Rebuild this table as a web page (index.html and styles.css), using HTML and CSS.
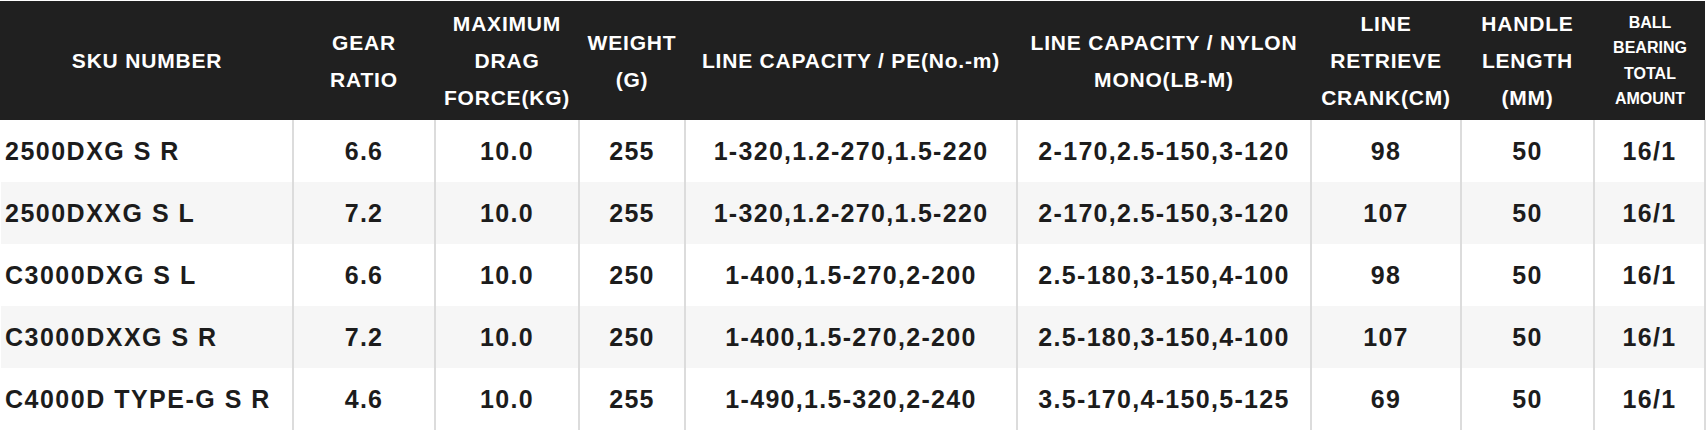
FILE: index.html
```html
<!DOCTYPE html>
<html lang="en">
<head>
<meta charset="utf-8">
<title>Spec table</title>
<link rel="stylesheet" href="styles.css">
</head>
<body>
<table class="spec">
  <colgroup>
    <col class="c-sku"><col class="c-gear"><col class="c-drag"><col class="c-weight"><col class="c-pe"><col class="c-nylon"><col class="c-crank"><col class="c-handle"><col class="c-ball">
  </colgroup>
  <thead>
    <tr>
      <th>SKU NUMBER</th>
      <th>GEAR<br>RATIO</th>
      <th>MAXIMUM<br>DRAG<br>FORCE(KG)</th>
      <th>WEIGHT<br>(G)</th>
      <th>LINE CAPACITY / PE(No.-m)</th>
      <th>LINE CAPACITY / NYLON<br>MONO(LB-M)</th>
      <th>LINE<br>RETRIEVE<br>CRANK(CM)</th>
      <th>HANDLE<br>LENGTH<br>(MM)</th>
      <th class="small">BALL<br>BEARING<br>TOTAL<br>AMOUNT</th>
    </tr>
  </thead>
  <tbody>
    <tr><td class="sku">2500DXG S R</td><td>6.6</td><td>10.0</td><td>255</td><td>1-320,1.2-270,1.5-220</td><td>2-170,2.5-150,3-120</td><td>98</td><td>50</td><td>16/1</td></tr>
    <tr><td class="sku">2500DXXG S L</td><td>7.2</td><td>10.0</td><td>255</td><td>1-320,1.2-270,1.5-220</td><td>2-170,2.5-150,3-120</td><td>107</td><td>50</td><td>16/1</td></tr>
    <tr><td class="sku">C3000DXG S L</td><td>6.6</td><td>10.0</td><td>250</td><td>1-400,1.5-270,2-200</td><td>2.5-180,3-150,4-100</td><td>98</td><td>50</td><td>16/1</td></tr>
    <tr><td class="sku">C3000DXXG S R</td><td>7.2</td><td>10.0</td><td>250</td><td>1-400,1.5-270,2-200</td><td>2.5-180,3-150,4-100</td><td>107</td><td>50</td><td>16/1</td></tr>
    <tr><td class="sku">C4000D TYPE-G S R</td><td>4.6</td><td>10.0</td><td>255</td><td>1-490,1.5-320,2-240</td><td>3.5-170,4-150,5-125</td><td>69</td><td>50</td><td>16/1</td></tr>
  </tbody>
</table>
</body>
</html>
```
FILE: styles.css
```css
html, body {
  margin: 0;
  padding: 0;
  background: #ffffff;
}
body {
  padding-top: 1px;
}
.spec {
  width: 1704px;
  table-layout: fixed;
  border-collapse: collapse;
  font-family: "Liberation Sans", Arial, sans-serif;
  font-weight: 700;
}
.c-sku { width: 292px; }
.c-gear { width: 142px; }
.c-drag { width: 144px; }
.c-weight { width: 106px; }
.c-pe { width: 332px; }
.c-nylon { width: 294px; }
.c-crank { width: 150px; }
.c-handle { width: 133px; }
.c-ball { width: 111px; }

.spec th {
  background: #202020;
  color: #ffffff;
  font-size: 21px;
  line-height: 37px;
  height: 119px;
  padding: 0 2px;
  text-align: center;
  vertical-align: middle;
  border-left: 2px solid #202020;
  letter-spacing: 0.8px;
}
.spec th.small {
  font-size: 16px;
  line-height: 25.5px;
  letter-spacing: 0;
}
.spec td {
  height: 62px;
  padding: 0 4px;
  font-size: 25px;
  letter-spacing: 1.3px;
  color: #1c1c1c;
  text-align: center;
  vertical-align: middle;
  border-left: 2px solid #dcdcdc;
  white-space: nowrap;
}
.spec td:last-child {
  border-right: 2px solid #dcdcdc;
}
.spec td.sku {
  text-align: left;
  padding-left: 4px;
  border-left: none;
  letter-spacing: 1.5px;
}
.spec tbody tr:nth-child(even) td {
  background: #f6f6f6;
}
```
